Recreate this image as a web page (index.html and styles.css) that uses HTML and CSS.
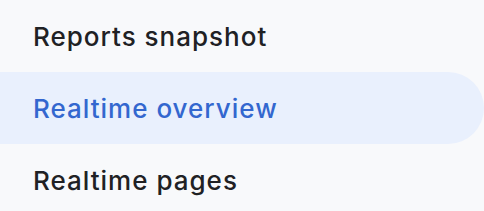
FILE: index.html
```html
<!DOCTYPE html>
<html>
<head>
<meta charset="utf-8">
<link rel="stylesheet" href="styles.css">
</head>
<body>
<nav class="nav">
  <a class="item">Reports snapshot</a>
  <a class="item active">Realtime overview</a>
  <a class="item">Realtime pages</a>
</nav>
</body>
</html>
```
FILE: styles.css
```css
html, body {
  margin: 0;
  padding: 0;
  background: #f8f9fb;
}
.nav {
  display: flex;
  flex-direction: column;
  width: 484px;
}
.item {
  display: flex;
  align-items: center;
  height: 72px;
  padding-left: 33px;
  font-family: Inter, Roboto, sans-serif;
  font-weight: 500;
  font-size: 26px;
  letter-spacing: 1px;
  color: #202124;
  border-radius: 0 36px 36px 0;
}
.item.active {
  background: #e9f0fd;
  color: #3367cf;
}
```
